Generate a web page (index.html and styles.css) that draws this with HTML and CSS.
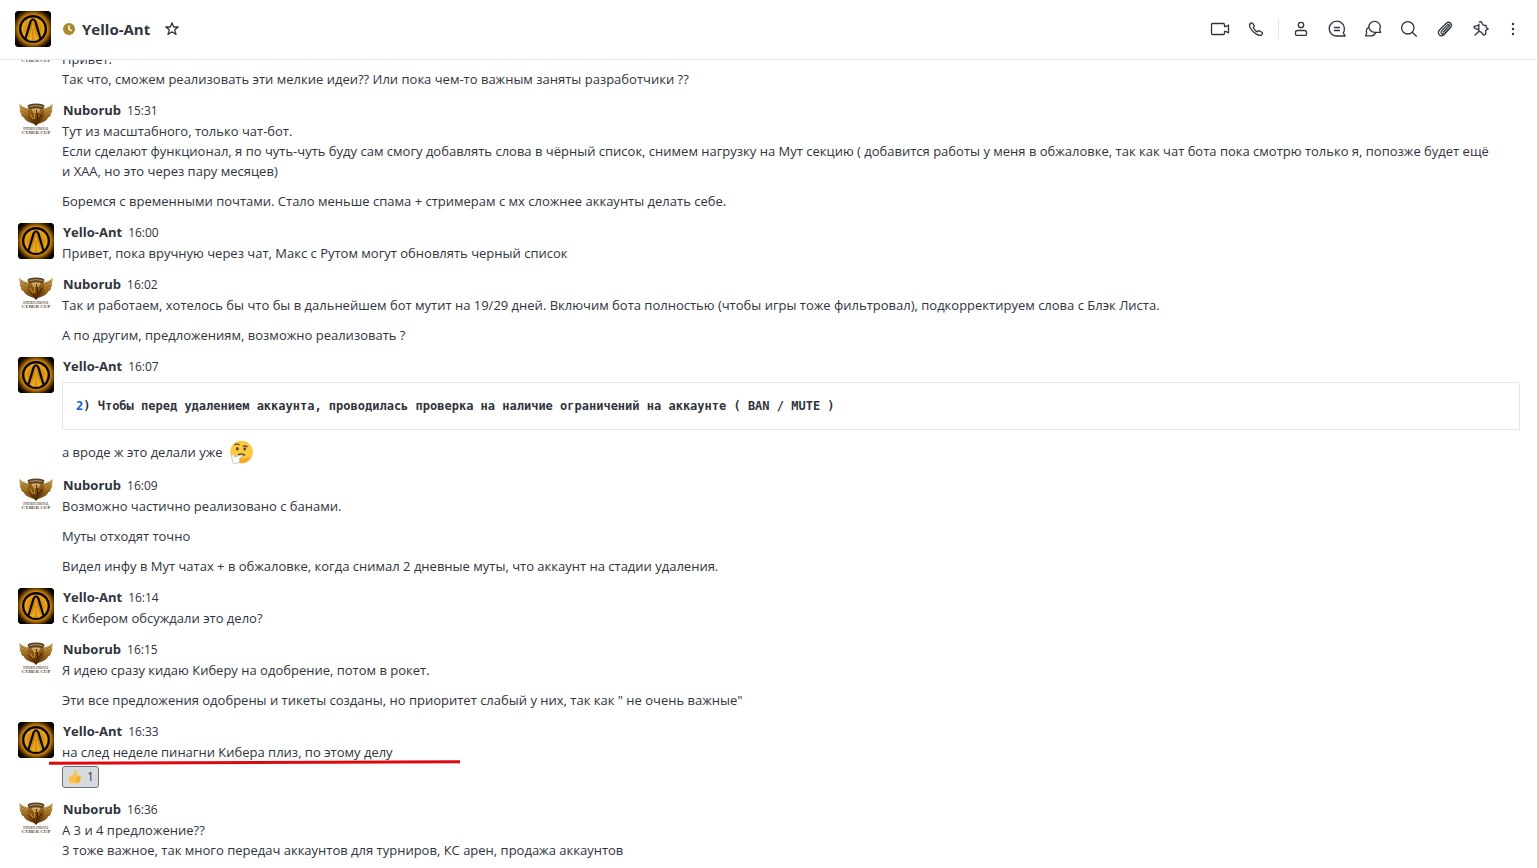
FILE: index.html
```html
<!DOCTYPE html>
<html lang="ru">
<head>
<meta charset="utf-8">
<title>Yello-Ant</title>
<link rel="stylesheet" href="styles.css">
</head>
<body>
<svg class="sprite" aria-hidden="true">
  <defs>
    <radialGradient id="glow" cx="50%" cy="50%" r="64%">
      <stop offset="0" stop-color="#e39a12"/>
      <stop offset=".6" stop-color="#d98d0e"/>
      <stop offset=".7" stop-color="#9a6008"/>
      <stop offset=".82" stop-color="#3a2003"/>
      <stop offset=".94" stop-color="#000"/>
    </radialGradient>
    <radialGradient id="disc" cx="50%" cy="50%" r="50%">
      <stop offset="0" stop-color="#b8760c"/>
      <stop offset=".6" stop-color="#d89312"/>
      <stop offset="1" stop-color="#f0ae1e"/>
    </radialGradient>
    <linearGradient id="bronze" x1="0" y1="0" x2="0" y2="1">
      <stop offset="0" stop-color="#9c6c22"/>
      <stop offset=".45" stop-color="#7d4d0c"/>
      <stop offset="1" stop-color="#3d1d02"/>
    </linearGradient>
    <linearGradient id="wing" x1="0" y1="0" x2="0" y2="1">
      <stop offset="0" stop-color="#cba968"/>
      <stop offset=".5" stop-color="#a97726"/>
      <stop offset="1" stop-color="#6b3f08"/>
    </linearGradient>
  </defs>
  <symbol id="ant" viewBox="0 0 36 36">
    <rect width="36" height="36" fill="#000"/>
    <rect width="36" height="36" fill="url(#glow)"/>
    <circle cx="18" cy="18" r="12.800" fill="url(#disc)" stroke="#0a0500" stroke-width="2.400"/>
    <path d="M10.500 27.500L15.600 10.500Q18 6 20.400 10.500L25.500 27.500" fill="none" stroke="#0a0500" stroke-width="2.200"/>
    <path d="M13.500 29.500L18 12L22.500 29.500Z" fill="#eba91f"/>
    <path d="M18 17V30" stroke="#c78313" stroke-width="1.200"/>
  </symbol>
  <symbol id="cup" viewBox="0 0 36 36">
    <path d="M1.500 2.500C3 5 6 6.500 11 7.500L13 15L16 23C10 21 6.500 19 5.500 16L4.500 16Q2.500 14 3 12L2 11.500Q1.500 9 2 8Q.8 5 1.500 2.500Z" fill="url(#wing)"/>
    <path d="M34.500 2.500C33 5 30 6.500 25 7.500L23 15L20 23C26 21 29.500 19 30.500 16L31.500 16Q33.500 14 33 12L34 11.500Q34.500 9 34 8Q35.200 5 34.500 2.500Z" fill="url(#wing)"/>
    <path d="M3 6.500L11 11M4 10L12 14.500M5.500 14L13 18M33 6.500L25 11M32 10L24 14.500M30.500 14L23 18" stroke="#7c5011" stroke-width=".5"/>
    <path d="M10.500 7H25.500L26 13Q27 17 22.500 20L18 25L13.500 20Q9 17 10 13Z" fill="url(#bronze)"/>
    <path d="M9.500 5Q10 2.500 18 2.500Q26 2.500 26.500 5L25 8Q18 6 11 8Z" fill="#5a4020"/>
    <path d="M11.500 5.500Q18 3.800 24.500 5.500" stroke="#b9a174" fill="none"/>
    <path d="M13.500 8Q18 7 22.500 8L20.500 12H15.500Z" fill="#d0ad6c"/>
    <path d="M16.500 9V18M12 13L15 18" stroke="#c08a35" fill="none" stroke-width="1.200"/>
    <path d="M18.500 9L20 20M24 13L21 18" stroke="#3a1c02" fill="none"/>
    <text class="crest-top" x="18" y="28.500" text-anchor="middle">INTERNATIONAL</text>
    <text class="crest" x="18" y="33" text-anchor="middle">CYBER CUP</text>
  </symbol>
</svg>

<div class="room">
  <header class="room-header">
    <svg class="avatar" role="img" aria-label="Yello-Ant"><use href="#ant"/></svg>
    <svg class="status" viewBox="0 0 12 12" role="img" aria-label="Отошёл"><circle cx="6" cy="6" r="6" fill="#ac892f"/><path d="M6 2.500V6.200L8.600 7.800" fill="none" stroke="#fff" stroke-width="1.500"/></svg>
    <h1 class="room-title">Yello-Ant</h1>
    <button class="tool star" aria-label="В избранное"><svg class="icon" viewBox="0 0 20 20"><path d="M10 3.800L11.700 8H16.200L12.700 10.800L14 15.500L10 12.800L6 15.500L7.300 10.800L3.800 8H8.300Z"/></svg></button>
    <div class="tools">
      <button class="tool" aria-label="Видеозвонок"><svg class="icon" viewBox="0 0 20 20"><path d="M2.500 4.500H13.500Q14.500 4.500 14.500 5.500V7.500H16L18.500 6.200V13.800L16 12.500H14.500V14.500Q14.500 15.500 13.500 15.500H2.500Q1.500 15.500 1.500 14.500V5.500Q1.500 4.500 2.500 4.500Z"/></svg></button>
      <button class="tool" aria-label="Позвонить"><svg class="icon" viewBox="0 0 20 20"><path d="M4.200 4.500Q5.700 3.200 6.800 4.400L8.200 6.600Q8.700 7.500 7.300 8.800Q8.700 11.600 11.300 12.900Q12.500 11.400 13.500 11.900L15.800 13.300Q17.200 14.500 15.500 15.900Q14 17.200 10 14.900Q6.500 12.700 4.300 9Q2.700 6 4.200 4.500Z"/></svg></button>
      <span class="divider"></span>
      <button class="tool" aria-label="Профиль"><svg class="icon" viewBox="0 0 20 20"><circle cx="10" cy="6" r="2.700"/><path d="M6.500 11.500H13.500Q15.500 11.500 15.500 13.500V15.300Q15.500 16.300 14.500 16.300H5.500Q4.500 16.300 4.500 15.300V13.500Q4.500 11.500 6.500 11.500Z"/></svg></button>
      <button class="tool" aria-label="Треды"><svg class="icon" viewBox="0 0 20 20"><path d="M16.300 13.800Q17.500 12 17.400 9.500A7.600 7.400 0 1 0 10 17H18.200Z M7.500 8.500H12.500M7.500 11.500H12.500"/></svg></button>
      <button class="tool" aria-label="Обсуждения"><svg class="icon" viewBox="0 0 20 20"><path d="M16.500 10.800Q17.300 9.500 17.300 7.800A5.700 5.500 0 1 0 11.700 13.300H17.700Z"/><path d="M5.400 8.500A4.800 4.800 0 0 0 3.700 14L2.500 16.900H8.500Q11.500 16.600 12.800 13.500"/></svg></button>
      <button class="tool" aria-label="Поиск"><svg class="icon" viewBox="0 0 20 20"><circle cx="8.800" cy="8.800" r="6.200"/><path d="M13.300 13.300L17.300 17.200"/></svg></button>
      <button class="tool" aria-label="Файлы"><svg class="icon" viewBox="0 0 20 20"><path d="M15.800 8.300L9.600 15Q6.500 18.200 4.200 15.700Q2.200 13.300 5 10.500L11.300 4.200Q13.600 2.300 15.600 4.200Q17.400 6.300 15.300 8.500L9.500 14.400Q7.800 15.900 6.500 14.500Q5.400 13.200 6.900 11.600L12.500 5.900Q13.700 5 14.300 6Q14.600 6.600 13.900 7.300L8.300 13"/></svg></button>
      <button class="tool" aria-label="Закреплённые"><svg class="icon" viewBox="0 0 20 20"><path d="M8.200 2.800L10 2.700L12.300 6.200L15.200 6.500L15.100 8.200L17.300 9.900L14.800 11.300L14.600 15.200L12.900 16.200L9.700 12.800L8 12.300L4 16M7.800 12.300L8 10.800L3.500 9.200L3 7.300L7 6.600L7.900 5.200Z"/></svg></button>
      <button class="tool tool-narrow" aria-label="Ещё"><svg class="icon dots" viewBox="0 0 20 20"><circle cx="10" cy="5" r="1.200"/><circle cx="10" cy="10" r="1.200"/><circle cx="10" cy="15" r="1.200"/></svg></button>
    </div>
  </header>

  <main class="messages">
    <article class="message">
      <svg class="avatar" aria-hidden="true"><use href="#cup"/></svg>
      <div class="content">
        <div class="byline"></div>
        <p>Привет.<br>Так что, сможем реализовать эти мелкие идеи?? Или пока чем-то важным заняты разработчики ??</p>
      </div>
    </article>
    <article class="message">
      <svg class="avatar" aria-hidden="true"><use href="#cup"/></svg>
      <div class="content">
        <div class="byline"><strong>Nuborub</strong><time>15:31</time></div>
        <p>Тут из масштабного, только чат-бот.<br>Если сделают функционал, я по чуть-чуть буду сам смогу добавлять слова в чёрный список, снимем нагрузку на Мут секцию ( добавится работы у меня в обжаловке, так как чат бота пока смотрю только я, попозже будет ещё и&nbsp;ХАА, но это через пару месяцев)</p>
        <p>Боремся с временными почтами. Стало меньше спама + стримерам с мх сложнее аккаунты делать себе.</p>
      </div>
    </article>
    <article class="message">
      <svg class="avatar" aria-hidden="true"><use href="#ant"/></svg>
      <div class="content">
        <div class="byline"><strong>Yello-Ant</strong><time>16:00</time></div>
        <p>Привет, пока вручную через чат, Макс с Рутом могут обновлять черный список</p>
      </div>
    </article>
    <article class="message">
      <svg class="avatar" aria-hidden="true"><use href="#cup"/></svg>
      <div class="content">
        <div class="byline"><strong>Nuborub</strong><time>16:02</time></div>
        <p>Так и работаем, хотелось бы что бы в дальнейшем бот мутит на 19/29 дней. Включим бота полностью (чтобы игры тоже фильтровал), подкорректируем слова с Блэк Листа.</p>
        <p>А по другим, предложениям, возможно реализовать ?</p>
      </div>
    </article>
    <article class="message">
      <svg class="avatar" aria-hidden="true"><use href="#ant"/></svg>
      <div class="content">
        <div class="byline"><strong>Yello-Ant</strong><time>16:07</time></div>
        <pre class="code"><code><span class="number">2</span>) Чтобы перед удалением аккаунта, проводилась проверка на наличие ограничений на аккаунте ( BAN / MUTE )</code></pre>
        <p class="with-emoji">а вроде ж это делали уже
          <svg class="emoji" viewBox="0 0 24 24" role="img" aria-label="Задумался"><circle cx="12.500" cy="12" r="11.300" fill="#fdc940"/><path d="M2 16Q7 21 22 17Q18 24 11 23Z" fill="#f9a62b"/><ellipse cx="8.300" cy="8.700" rx="1.300" ry="1.700" fill="#4b3a2b"/><ellipse cx="15.700" cy="8.900" rx="1.300" ry="1.700" fill="#4b3a2b"/><path d="M5.500 5Q8 3 10.500 5M13.500 6.300Q16.500 5 18.500 7M9 14.800Q13 12.500 16 15.500" fill="none" stroke="#4b3a2b" stroke-width="1.200"/><path d="M3 14.500Q4 13 5 15L6 17L12.500 15Q14 15.500 12.500 17L10.500 18L11 21Q9 24 5.500 23.500Q3 23 3 19Z" fill="#fff" stroke="#b9b4ae" stroke-width=".7"/></svg></p>
      </div>
    </article>
    <article class="message">
      <svg class="avatar" aria-hidden="true"><use href="#cup"/></svg>
      <div class="content">
        <div class="byline"><strong>Nuborub</strong><time>16:09</time></div>
        <p>Возможно частично реализовано с банами.</p>
        <p>Муты отходят точно</p>
        <p>Видел инфу в Мут чатах + в обжаловке, когда снимал 2 дневные муты, что аккаунт на стадии удаления.</p>
      </div>
    </article>
    <article class="message">
      <svg class="avatar" aria-hidden="true"><use href="#ant"/></svg>
      <div class="content">
        <div class="byline"><strong>Yello-Ant</strong><time>16:14</time></div>
        <p>с Кибером обсуждали это дело?</p>
      </div>
    </article>
    <article class="message">
      <svg class="avatar" aria-hidden="true"><use href="#cup"/></svg>
      <div class="content">
        <div class="byline"><strong>Nuborub</strong><time>16:15</time></div>
        <p>Я идею сразу кидаю Киберу на одобрение, потом в рокет.</p>
        <p>Эти все предложения одобрены и тикеты созданы, но приоритет слабый у них, так как " не очень важные"</p>
      </div>
    </article>
    <article class="message">
      <svg class="avatar" aria-hidden="true"><use href="#ant"/></svg>
      <div class="content">
        <div class="byline"><strong>Yello-Ant</strong><time>16:33</time></div>
        <p>на след неделе пинагни Кибера плиз, по этому делу</p>
        <button class="reaction"><svg class="thumb" viewBox="0 0 16 16" aria-hidden="true"><path d="M2 7.500L5 7Q8 4.500 8 1.500Q9.500 .5 10 2.500Q10.300 4 9.500 6.300H13Q14.500 6.500 14 8Q14.800 9 13.800 10Q14.300 11.300 13.200 12Q13.500 13.500 12 14Q9 15 6 13.700L2 14.300Z" fill="#fdc045"/><path d="M9.500 8.500H13M9.500 10.500H13M9.500 12.300H12.500" stroke="#e3962c" stroke-width=".8"/></svg><span>1</span></button>
      </div>
      <svg class="underline" viewBox="0 0 411 5" preserveAspectRatio="none" aria-hidden="true"><path d="M0 3.200L411 1.700" stroke="#dc0a0e" stroke-width="3"/></svg>
    </article>
    <article class="message">
      <svg class="avatar" aria-hidden="true"><use href="#cup"/></svg>
      <div class="content">
        <div class="byline"><strong>Nuborub</strong><time>16:36</time></div>
        <p>А 3 и 4 предложение??<br>3 тоже важное, так много передач аккаунтов для турниров, КС арен, продажа аккаунтов</p>
      </div>
    </article>
  </main>
</div>
</body>
</html>
```

FILE: styles.css
```css
* { box-sizing: border-box; }

body {
  margin: 0;
  color: #2f343d;
  background: #fff;
  font: 13px/20px "Open Sans", "Noto Sans", sans-serif;
}

.sprite {
  position: absolute;
  width: 0;
  height: 0;
}

.crest,
.crest-top {
  font-family: "Liberation Serif", serif;
  font-weight: 700;
  fill: #5d4c3c;
}

.crest { font-size: 5px; }

.crest-top { font-size: 3px; }

.room {
  display: flex;
  flex-direction: column;
  height: 100vh;
  overflow: hidden;
}

.room-header {
  display: flex;
  flex: none;
  align-items: center;
  height: 60px;
  padding: 0 14px 2px 15px;
  border-bottom: 1px solid #e4e7ea;
}

.avatar {
  flex: none;
  width: 36px;
  height: 36px;
  border-radius: 4px;
}

.status {
  width: 12px;
  height: 12px;
  margin: 0 7px 0 12px;
}

.room-title {
  margin: 0;
  font-size: 15px;
  font-weight: 700;
}

.tools {
  display: flex;
  align-items: center;
  gap: 8px;
  margin-left: auto;
}

.tool {
  display: grid;
  place-items: center;
  width: 28px;
  height: 28px;
  padding: 0;
  border: 0;
  background: none;
}

.tool-narrow { width: 20px; }

.star { margin-left: 8px; }

.icon {
  width: 20px;
  height: 20px;
  fill: none;
  stroke: #2f343d;
  stroke-width: 1.3;
  stroke-linejoin: round;
  stroke-linecap: round;
}

.dots {
  fill: #2f343d;
  stroke: none;
}

.divider {
  width: 1px;
  height: 20px;
  background: #e4e7ea;
}

.messages {
  display: flex;
  flex: 1;
  flex-direction: column;
  justify-content: flex-end;
  min-height: 0;
  padding-bottom: 6px;
  overflow: hidden;
}

.message {
  position: relative;
  display: flex;
  flex: none;
  gap: 8px;
  padding: 8px 17px 2px 18px;
}

.message > .avatar { margin-top: 2px; }

.content {
  flex: 1;
  min-width: 0;
}

.byline {
  display: flex;
  gap: 6px;
  align-items: baseline;
  height: 22px;
  padding-left: 1px;
  line-height: 22px;
}

.byline time { font-size: 12px; }

p { margin: 0; }

p + p { margin-top: 10px; }

.code {
  margin: 5px 0 10px;
  padding: 13px;
  border: 1px solid #e4e7ea;
  font: 700 12px/20px "DejaVu Sans Mono", monospace;
}

.code code { font: inherit; }

.number { color: #095ad2; }

.with-emoji {
  display: flex;
  align-items: center;
  gap: 6px;
  height: 24px;
}

.emoji {
  width: 24px;
  height: 24px;
}

.reaction {
  display: flex;
  align-items: center;
  gap: 4px;
  height: 22px;
  margin-top: 4px;
  padding: 0 4px;
  border: 1px solid #6c727a;
  border-radius: 3px;
  color: #2f343d;
  background: #d7dbe0;
  font: inherit;
  font-size: 12px;
}

.thumb {
  width: 16px;
  height: 16px;
}

.underline {
  position: absolute;
  top: 48px;
  left: 49px;
  width: 411px;
  height: 5px;
}
```
